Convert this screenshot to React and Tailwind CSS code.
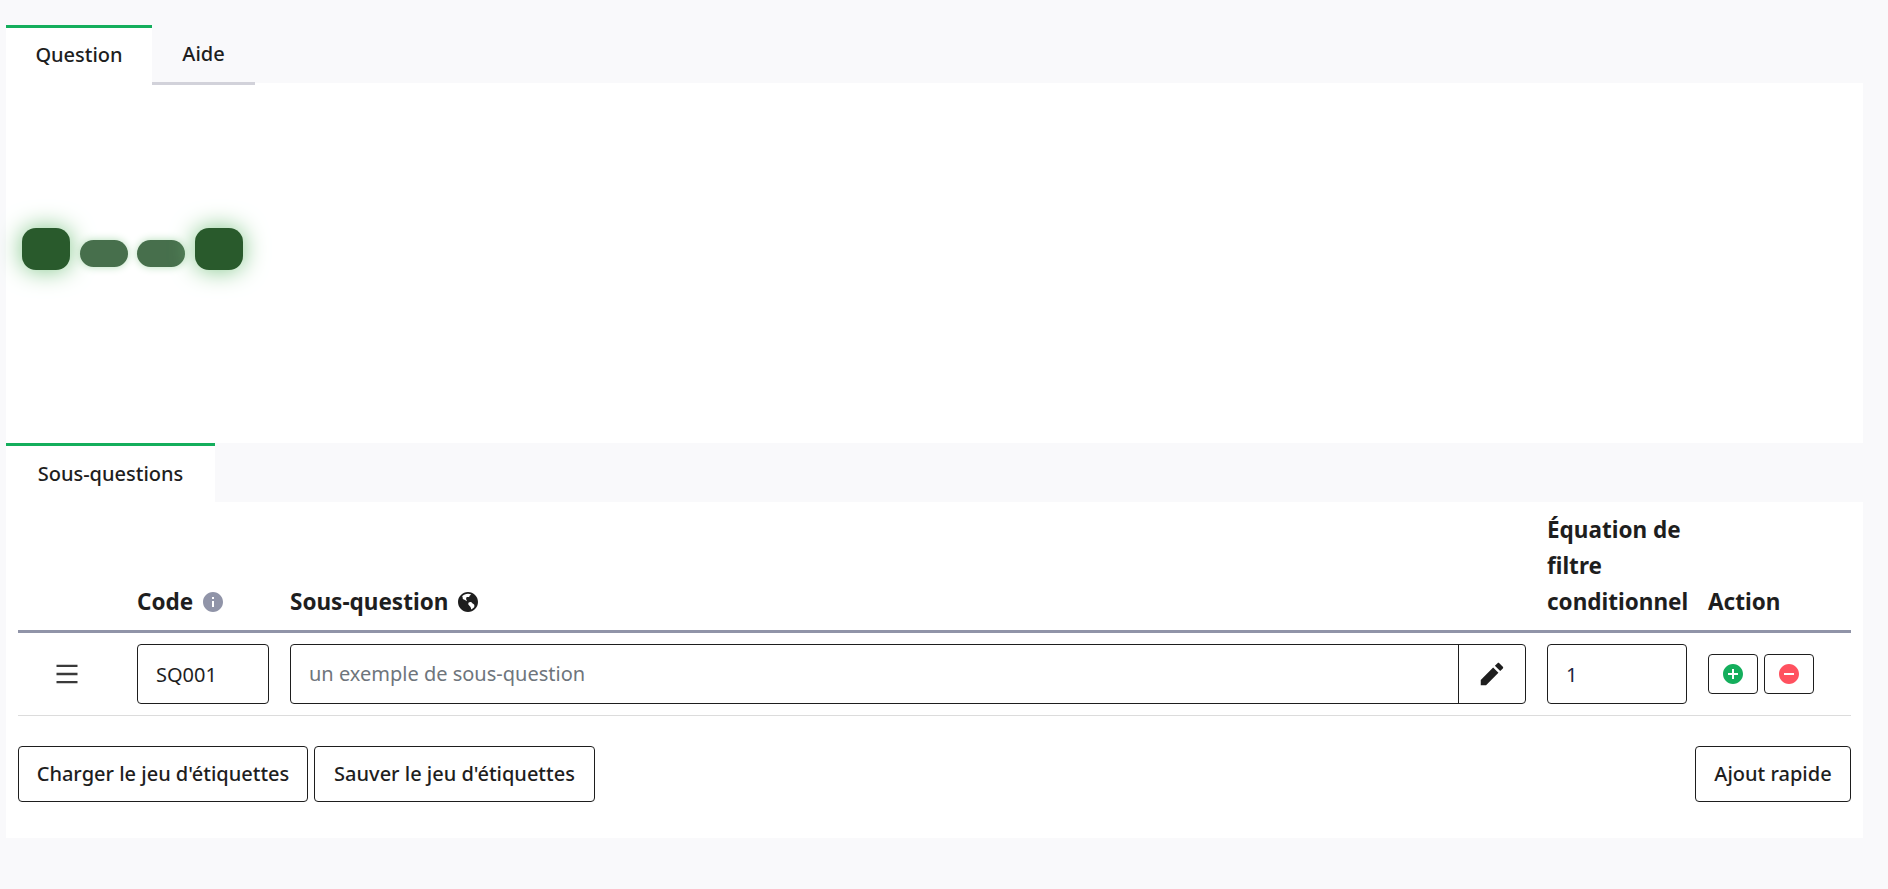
import React from 'react';
import {
  RiAddCircleFill,
  RiEarthFill,
  RiIndeterminateCircleFill,
  RiInformationFill,
  RiMenuFill,
  RiPencilFill,
} from 'react-icons/ri';

const OutlineButton = ({ children, className = '' }) => (
  <button className={`h-14 rounded border border-[#1e1e1e] bg-white text-[20px] font-medium text-[#1e1e1e] ${className}`}>
    {children}
  </button>
);

const App = () => {
  return (
    <div className="h-[889px] bg-[#f9f9fb] pl-[6px] pr-[25px] pt-[25px] font-['Noto_Sans',sans-serif] text-[#1e1e1e]">
      {/* Question tabs */}
      <div className="flex h-[58px] items-stretch">
        <div className="relative z-10 flex h-[60px] w-[146px] items-center justify-center border-t-[3px] border-[#14ae5c] bg-white pb-[3px] text-[20px] font-medium">
          Question
        </div>
        <div className="relative z-10 flex h-[60px] w-[103px] items-center justify-center border-b-[3px] border-[#d2d2da] pt-[1px] text-[20px] font-medium">
          Aide
        </div>
      </div>
      <div className="flex h-[360px] items-start gap-[9.6px] bg-white pl-4 pt-[145px]">
        <div className="h-[42px] w-12 rounded-[14px] bg-[#295a2c] shadow-[0_0_24px_#7cc484]" />
        <div className="mt-3 h-[27px] w-12 rounded-[14px] bg-[#476f4c] shadow-[0_0_8px_#b5ddb9]" />
        <div className="mt-3 h-[27px] w-12 rounded-[14px] bg-[#476f4c] shadow-[0_0_8px_#b5ddb9]" />
        <div className="h-[42px] w-12 rounded-[14px] bg-[#295a2c] shadow-[0_0_24px_#7cc484]" />
      </div>

      {/* Sub-questions */}
      <div className="flex h-[59px] w-[209px] items-center justify-center border-t-[3px] border-[#14ae5c] bg-white text-[20px] font-medium">
        Sous-questions
      </div>
      <div className="h-[336px] bg-white px-3">
        <table className="w-full table-fixed border-collapse">
          <colgroup>
            <col className="w-[108.5px]" />
            <col className="w-[153px]" />
            <col />
            <col className="w-[161px]" />
            <col className="w-[153.5px]" />
          </colgroup>
          <thead>
            <tr className="border-b-[3px] border-[#9094a8] align-bottom text-[22.5px] font-bold leading-9">
              <th />
              <th className="px-[10.5px] pb-[10px] pt-[10px] text-left font-bold">
                <span className="inline-flex items-center gap-[8px]">
                  Code <RiInformationFill className="size-6 text-[#9094a8]" />
                </span>
              </th>
              <th className="px-[10.5px] pb-[10px] pt-[10px] text-left font-bold">
                <span className="inline-flex items-center gap-[8px]">
                  Sous-question <RiEarthFill className="size-6" />
                </span>
              </th>
              <th className="px-[10.5px] pb-[10px] pt-[10px] text-left font-bold">Équation de filtre conditionnel</th>
              <th className="px-[10.5px] pb-[10px] pt-[10px] text-left font-bold">Action</th>
            </tr>
          </thead>
          <tbody>
            <tr className="h-[84px] border-b border-[#dcdcdc]">
              <td className="pr-[10px] text-center">
                <RiMenuFill className="mx-auto size-[28px] text-[#3a3a3a]" />
              </td>
              <td className="px-[10.5px]">
                <input
                  defaultValue="SQ001"
                  className="h-[60px] w-full rounded border border-[#1e1e1e] px-[18px] text-[20px] text-[#1e1e1e] outline-none"
                />
              </td>
              <td className="px-[10.5px]">
                <div className="flex h-[60px] rounded border border-[#1e1e1e]">
                  <input
                    placeholder="un exemple de sous-question"
                    className="min-w-0 flex-1 px-[18px] text-[20px] outline-none placeholder:text-[#6e757c]"
                  />
                  <button className="flex w-[67px] items-center justify-center border-l border-[#1e1e1e]">
                    <RiPencilFill className="size-[30px]" />
                  </button>
                </div>
              </td>
              <td className="px-[10.5px]">
                <input
                  defaultValue="1"
                  className="h-[60px] w-full rounded border border-[#1e1e1e] px-[18px] text-[20px] text-[#1e2440] outline-none"
                />
              </td>
              <td className="px-[10.5px]">
                <div className="flex gap-[6px]">
                  <button className="flex h-10 w-[50px] items-center justify-center rounded border border-[#1e1e1e]">
                    <RiAddCircleFill className="size-6 text-[#14ae5c]" />
                  </button>
                  <button className="flex h-10 w-[50px] items-center justify-center rounded border border-[#1e1e1e]">
                    <RiIndeterminateCircleFill className="size-6 text-[#ff515f]" />
                  </button>
                </div>
              </td>
            </tr>
          </tbody>
        </table>
        <div className="mt-[30px] flex gap-[6px]">
          <OutlineButton className="w-[290px]">Charger le jeu d'étiquettes</OutlineButton>
          <OutlineButton className="w-[281px]">Sauver le jeu d'étiquettes</OutlineButton>
          <OutlineButton className="ml-auto w-[156px]">Ajout rapide</OutlineButton>
        </div>
      </div>
    </div>
  );
};

export default App;
